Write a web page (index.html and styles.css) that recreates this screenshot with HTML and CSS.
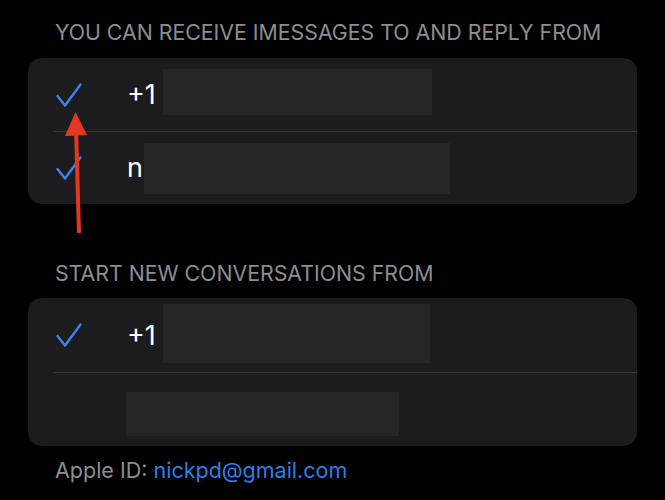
FILE: index.html
```html
<!DOCTYPE html>
<html lang="en">
<head>
    <meta charset="UTF-8">
    <meta name="viewport" content="width=device-width, initial-scale=1.0">
    <title>Send &amp; Receive</title>
    <link rel="stylesheet" href="styles.css">
</head>
<body>
    <h3 class="section-title first">YOU CAN RECEIVE IMESSAGES TO AND REPLY FROM</h3>
    <div class="card">
        <div class="row">
            <svg class="check" viewBox="0 0 26 24"><path d="M1.5 13 L9 22.5 L24.5 1.5"/></svg>
            <span class="label">+1</span>
            <div class="redact r1"></div>
        </div>
        <div class="row">
            <svg class="check" viewBox="0 0 26 24"><path d="M1.5 13 L9 22.5 L24.5 1.5"/></svg>
            <span class="label">n</span>
            <div class="redact r2"></div>
        </div>
    </div>

    <h3 class="section-title second">START NEW CONVERSATIONS FROM</h3>
    <div class="card">
        <div class="row tall">
            <svg class="check" viewBox="0 0 26 24"><path d="M1.5 13 L9 22.5 L24.5 1.5"/></svg>
            <span class="label">+1</span>
            <div class="redact r3"></div>
        </div>
        <div class="row tall">
            <span class="check-space"></span>
            <div class="redact r4"></div>
        </div>
    </div>

    <p class="apple-id">Apple ID: <span class="email">nickpd@gmail.com</span></p>

    <!-- annotation arrow drawn over the first check -->
    <svg class="arrow" viewBox="0 0 30 126">
        <line x1="19" y1="124" x2="16" y2="20"/>
        <polygon points="15.5,3 5,27 27,26"/>
    </svg>
</body>
</html>
```

FILE: styles.css
```css
body {
    margin: 0;
    padding: 0;
    background-color: #000;
    font-family: "Inter", "Roboto", sans-serif;
    position: relative;
    height: 500px;
    overflow: hidden;
}

.section-title {
    margin: 0;
    padding-left: 55px;
    height: 24px;
    line-height: 24px;
    font-size: 21.3px;
    font-weight: 400;
    color: #8d8d92;
}

.section-title.first {
    padding-top: 20px;
    margin-bottom: 14px;
}

.section-title.second {
    margin-top: 57px;
    margin-bottom: 13px;
}

.card {
    margin: 0 28px;
    background-color: #1c1c1e;
    border-radius: 14px;
    overflow: hidden;
}

.row {
    display: flex;
    align-items: center;
    height: 73px;
    padding-left: 28px;
    position: relative;
}

.row.tall {
    height: 74px;
}

.row + .row::before {
    content: "";
    position: absolute;
    top: 0;
    left: 25px;
    right: 0;
    height: 1px;
    background-color: #38383a;
}

.check {
    width: 26px;
    height: 24px;
    flex-shrink: 0;
    fill: none;
    stroke: #3a84ee;
    stroke-width: 2.4;
    stroke-linecap: round;
    stroke-linejoin: round;
}

.check-space {
    width: 26px;
    flex-shrink: 0;
}

.label {
    margin-left: 45px;
    font-size: 27px;
    color: #fff;
}

.redact {
    background-color: #262626;
}

.r1 {
    width: 269px;
    height: 46px;
    margin-left: 7px;
    margin-top: -5px;
}

.r2 {
    width: 306px;
    height: 51px;
    margin-left: 1px;
    margin-top: 2px;
}

.r3 {
    width: 267px;
    height: 59px;
    margin-left: 7px;
    margin-top: -4px;
}

.r4 {
    width: 273px;
    height: 44px;
    margin-left: 44px;
    margin-top: 10px;
}

.apple-id {
    margin: 12px 0 0;
    padding-left: 55px;
    line-height: 24px;
    font-size: 21.5px;
    color: #8d8d92;
}

.email {
    color: #2f7ee8;
}

.arrow {
    position: absolute;
    left: 60px;
    top: 109px;
    width: 30px;
    height: 126px;
}

.arrow line {
    stroke: #e5371f;
    stroke-width: 4;
}

.arrow polygon {
    fill: #e5371f;
}
```
